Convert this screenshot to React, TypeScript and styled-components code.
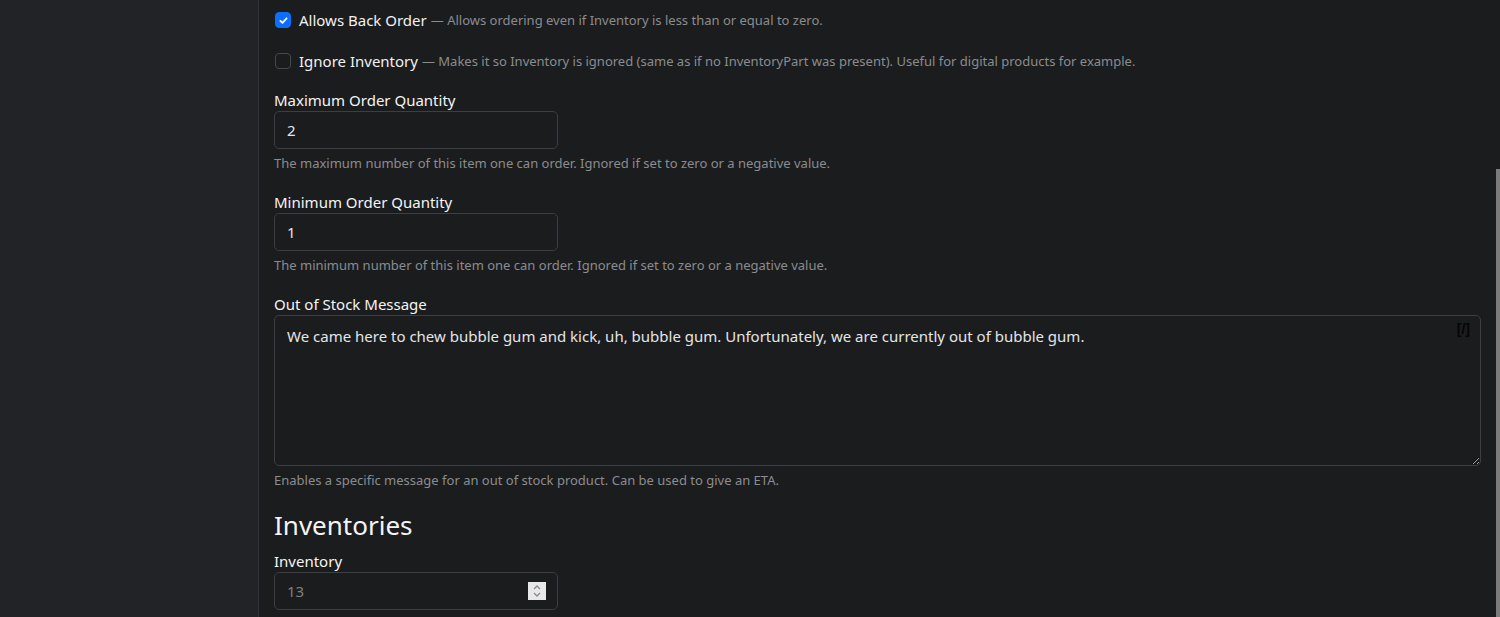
import React from "react";
import styled, { createGlobalStyle } from "styled-components";

const GlobalStyle = createGlobalStyle`
    html, body {
        margin: 0;
        padding: 0;
        background: #1b1c1e;
        overflow: hidden;
    }
    * {
        box-sizing: border-box;
    }
`;

const Page = styled.div`
    display: flex;
    width: 1500px;
    height: 617px;
    background: #1b1c1e;
    font-family: "Noto Sans", "Open Sans", sans-serif;
    color: #f1f1f1;
    position: relative;
    overflow: hidden;
`;

const Sidebar = styled.aside`
    width: 259px;
    flex-shrink: 0;
    background: #212326;
    border-right: 1px solid #303338;
`;

const Main = styled.main`
    flex: 1;
    padding: 9px 19px 0 15px;
    display: flex;
    flex-direction: column;
`;

const CheckList = styled.div`
    display: flex;
    flex-direction: column;
    gap: 19px;
    margin-bottom: 17px;
`;

const CheckRow = styled.label`
    display: flex;
    align-items: center;
    height: 22px;
    font-size: 15px;
    line-height: 22px;
`;

const Box = styled.span<{ $checked?: boolean }>`
    width: 16px;
    height: 16px;
    border-radius: 4px;
    margin: 0 8px 0 1px;
    display: inline-flex;
    align-items: center;
    justify-content: center;
    background: ${(p) => (p.$checked ? "#0d6efd" : "transparent")};
    border: 1px solid ${(p) => (p.$checked ? "#0d6efd" : "#45484c")};
`;

const Hint = styled.span`
    color: #8a8c8f;
    font-size: 13px;
    margin-left: 4px;
`;

const Group = styled.div`
    display: flex;
    flex-direction: column;
    margin-bottom: 18px;
`;

const Label = styled.div`
    font-size: 15px;
    line-height: 22px;
    color: #f4f4f4;
`;

const InputWrap = styled.div`
    position: relative;
    width: 284px;
`;

const Input = styled.div<{ $muted?: boolean }>`
    height: 38px;
    width: 100%;
    border: 1px solid #3b3e42;
    border-radius: 5px;
    padding: 0 12px;
    display: flex;
    align-items: center;
    font-size: 15px;
    color: ${(p) => (p.$muted ? "#7d8084" : "#e3e5e7")};
    background: #1b1c1e;
`;

const Spinner = styled.span`
    position: absolute;
    right: 12px;
    top: 10px;
    width: 18px;
    height: 18px;
    background: #e8e8ea;
    display: flex;
    align-items: center;
    justify-content: center;
`;

const TextArea = styled.textarea`
    display: block;
    height: 151px;
    width: 100%;
    border: 1px solid #3b3e42;
    border-radius: 5px;
    padding: 9px 12px;
    font-family: "Noto Sans", "Open Sans", sans-serif;
    font-size: 15px;
    line-height: 22px;
    color: #e3e5e7;
    background: #1b1c1e;
    resize: vertical;
    outline: none;
`;

const AreaWrap = styled.div`
    position: relative;
`;

const Toggle = styled.span`
    position: absolute;
    right: 11px;
    top: 6px;
    font-family: "Liberation Sans", sans-serif;
    font-weight: 700;
    font-size: 14px;
    line-height: 16px;
    color: #050505;
`;

const Help = styled.div`
    margin-top: 4px;
    font-size: 13px;
    line-height: 20px;
    color: #8a8c8f;
`;

const Heading = styled.h3`
    margin: 0 0 8px;
    font-size: 26px;
    font-weight: 400;
    line-height: 34px;
    color: #f4f4f4;
`;

const Scrollbar = styled.div`
    position: absolute;
    right: 0;
    top: 169px;
    width: 4px;
    bottom: 0;
    background: #7b7b7b;
`;

export default function App() {
    return (
        <Page>
            <GlobalStyle />
            <Sidebar />
            <Main>
                <CheckList>
                    <CheckRow>
                        <Box $checked>
                            <svg width="11" height="11" viewBox="0 0 16 16">
                                <path d="M3.5 8.5l3 3 6-6.5" fill="none" stroke="#fff" strokeWidth="2.6" strokeLinecap="round" strokeLinejoin="round" />
                            </svg>
                        </Box>
                        Allows Back Order
                        <Hint>— Allows ordering even if Inventory is less than or equal to zero.</Hint>
                    </CheckRow>
                    <CheckRow>
                        <Box />
                        Ignore Inventory
                        <Hint>— Makes it so Inventory is ignored (same as if no InventoryPart was present). Useful for digital products for example.</Hint>
                    </CheckRow>
                </CheckList>

                <Group>
                    <Label>Maximum Order Quantity</Label>
                    <InputWrap>
                        <Input>2</Input>
                    </InputWrap>
                    <Help>The maximum number of this item one can order. Ignored if set to zero or a negative value.</Help>
                </Group>

                <Group>
                    <Label>Minimum Order Quantity</Label>
                    <InputWrap>
                        <Input>1</Input>
                    </InputWrap>
                    <Help>The minimum number of this item one can order. Ignored if set to zero or a negative value.</Help>
                </Group>

                <Group>
                    <Label>Out of Stock Message</Label>
                    <AreaWrap>
                        <TextArea
                            readOnly
                            defaultValue="We came here to chew bubble gum and kick, uh, bubble gum. Unfortunately, we are currently out of bubble gum."
                        />
                        <Toggle>[/]</Toggle>
                    </AreaWrap>
                    <Help>Enables a specific message for an out of stock product. Can be used to give an ETA.</Help>
                </Group>

                <Heading>Inventories</Heading>
                <Label>Inventory</Label>
                <InputWrap>
                    <Input $muted>13</Input>
                    <Spinner>
                        <svg width="10" height="14" viewBox="0 0 10 14">
                            <path d="M2 5l3-3 3 3M2 9l3 3 3-3" fill="none" stroke="#8a8a8a" strokeWidth="1.3" />
                        </svg>
                    </Spinner>
                </InputWrap>
            </Main>
            <Scrollbar />
        </Page>
    );
}
